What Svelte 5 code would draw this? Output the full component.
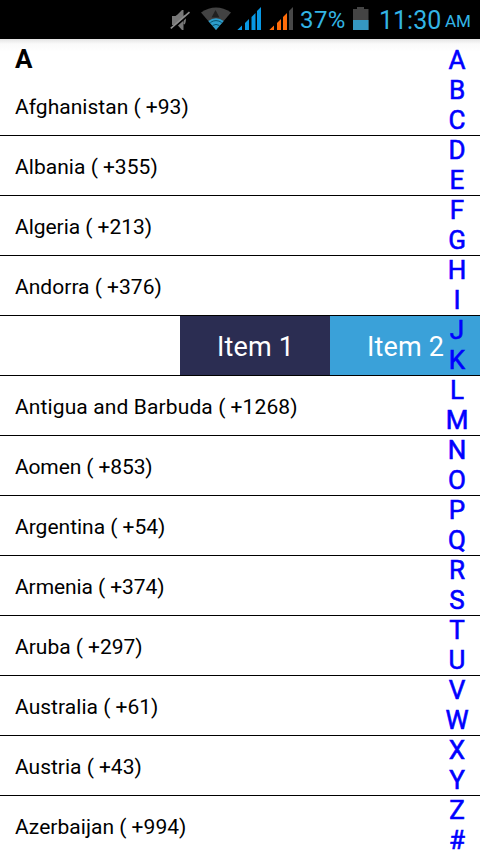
<script>
  const countries = [
    ['Afghanistan', '93', 0.03], ['Albania', '355', 0.04], ['Algeria', '213', -0.03], ['Andorra', '376', 0.03],
    null,
    ['Antigua and Barbuda', '1268', 0.12], ['Aomen', '853', -0.1], ['Argentina', '54', 0],
    ['Armenia', '374', -0.08], ['Aruba', '297', 0], ['Australia', '61', 0.04], ['Austria', '43', 0],
    ['Azerbaijan', '994', 0.04]
  ];
  const letters = [...'ABCDEFGHIJKLMNOPQRSTUVWXYZ#'];
</script>

<div class="screen">
  <header class="status">
    <svg width="145" height="38" viewBox="0 0 145 38" aria-hidden="true">
      <path d="M2 16h3.500l2-1.500L12 10h1.500v20H12l-4.500-5H2z" fill="#777" />
      <path d="M14 15.500q2 4.500 0 8.500" fill="none" stroke="#777" stroke-width="1.800" />
      <path d="M2 29.500 20.500 13" stroke="#000" stroke-width="2" />
      <path d="M.8 28.300 19.500 12.200" stroke="#8d8d8d" stroke-width="1.700" />
      <path d="M31 12.500Q46 2.500 61 12.500L46 30z" fill="#424242" />
      <path d="M41.500 17.500 45.500 10 49.500 17.500z" fill="#202020" />
      <path d="M38.300 21Q46 15.500 53.700 21L46 30z" fill="#2c9dcc" />
      <path d="M40.300 22.500Q46 18.700 51.700 22.500M42.500 25.500Q46 23.300 49.500 25.500" fill="none" stroke="#07516f" stroke-width="1" />
      <path d="M67.300 30 72 25.500V30zM75 30v-7l4-4v11zM81.500 30V17l4-4v17zM87 30V11l4-4v23z" fill="#0898e4" />
      <path d="M99.300 30 104 25.500V30zM107 30v-7l4-4v11zM113 30V17l4-4v17z" fill="#ff6c0a" />
      <path d="M119 30V11l4-4v23z" fill="#484848" />
    </svg>
    <span class="percent">37%</span>
    <svg width="16" height="38" viewBox="0 0 16 38" aria-hidden="true">
      <path d="M0 9h4V7h7v2h4.500v21H0z" fill="#444" />
      <path d="M0 20h15.500v10H0z" fill="#3597c2" />
    </svg>
    <span class="clock">11:30</span>
    <span class="ampm">AM</span>
  </header>

  <main>
    <h1>A</h1>
    <ul>
      {#each countries as c}
        {#if c}
          <li style:letter-spacing="{c[2]}px"><span>{c[0]} (</span><span>+{c[1]})</span></li>
        {:else}
          <li class="swiped"><button class="one">Item 1</button><button class="two">Item 2</button></li>
        {/if}
      {/each}
    </ul>
    <nav>
      {#each letters as l}<a href="#{l}">{l}</a>{/each}
    </nav>
  </main>
</div>

<style>
  .screen { width: 480px; height: 854px; overflow: hidden; background: #fff; font-family: Roboto, "Noto Sans", sans-serif; display: flex; flex-direction: column; }
  .status { flex: none; height: 39px; box-sizing: border-box; background: #000; color: #33b5e5; display: flex; padding-left: 170px; line-height: 40px; white-space: nowrap; }
  svg { display: block; flex: none; }
  .percent { font-size: 24px; width: 53px; margin-left: -15px; letter-spacing: .4px; }
  .clock { font-size: 25px; margin-left: 10px; width: 66px; line-height: 41px; }
  .ampm { font-size: 17px; line-height: 43px; }
  main { position: relative; flex: 1; background: linear-gradient(#e4e4e4, #fafafa 5px, #fff 13px); overflow: hidden; }
  h1 { margin: 0; height: 37px; padding-left: 15px; font-size: 26px; line-height: 41px; font-weight: 700; }
  ul { list-style: none; margin: 0; padding: 0; }
  li { height: 60px; box-sizing: border-box; border-bottom: 1px solid #000; padding-left: 15px; display: flex; gap: 5px; font-size: 21px; line-height: 63px; white-space: nowrap; color: #000; }
  .swiped { padding: 0 0 0 180px; gap: 0; }
  button { width: 150px; height: 59px; padding: 0 0 0 1px; border: 0; color: #fff; font: 27px/62px Roboto, sans-serif; letter-spacing: .15px; }
  .one { background: #2b2d52; }
  .two { background: #3aa1d9; }
  nav { position: absolute; top: 6px; right: 8px; width: 30px; display: flex; flex-direction: column; }
  a { height: 30px; line-height: 30px; font-size: 26px; font-weight: 400; -webkit-text-stroke: .6px #00f; text-align: center; color: #00f; text-decoration: none; }
</style>
